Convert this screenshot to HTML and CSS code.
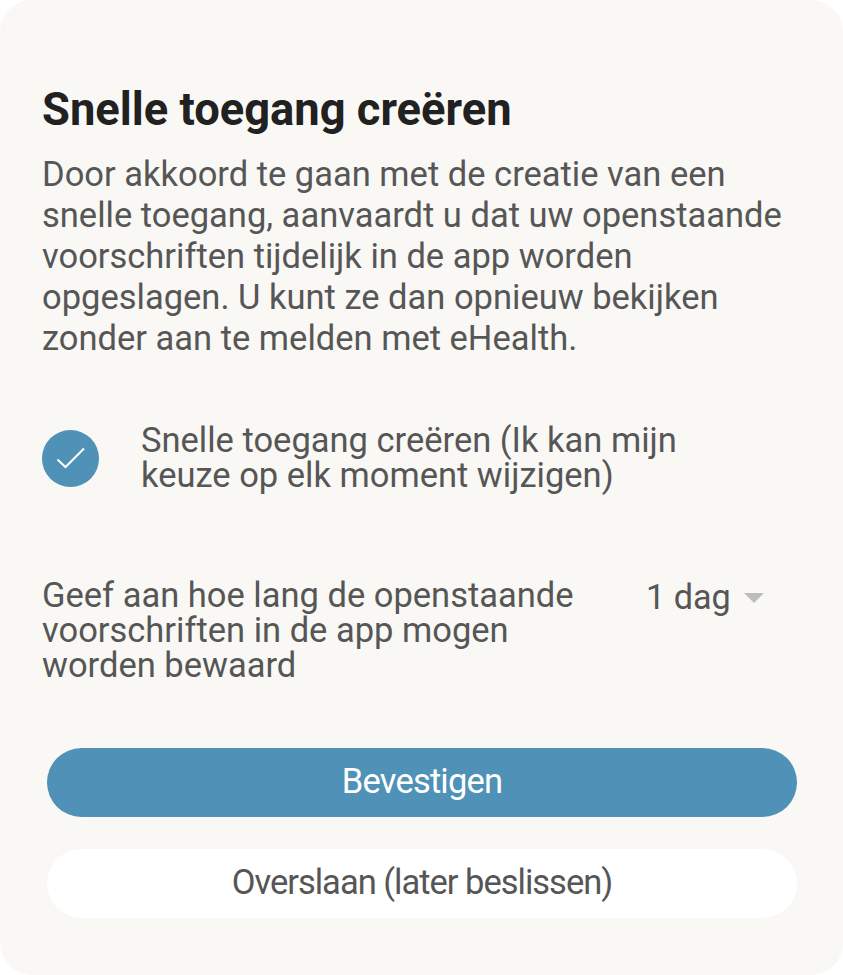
FILE: index.html
```html
<!DOCTYPE html>
<html lang="nl">
<head>
<meta charset="utf-8">
<title>Snelle toegang creëren</title>
<link rel="stylesheet" href="styles.css">
</head>
<body>
<main class="dialog">
  <h1 class="title">Snelle toegang creëren</h1>
  <p class="intro">Door akkoord te gaan met de creatie van een<br>snelle toegang, aanvaardt u dat uw openstaande<br>voorschriften tijdelijk in de app worden<br>opgeslagen. U kunt ze dan opnieuw bekijken<br>zonder aan te melden met eHealth.</p>
  <div class="check-row">
    <span class="check">
      <svg width="30" height="22" viewBox="0 0 30 22"><path d="M1.5 12.5 L9.5 20 L28 1.5" fill="none" stroke="#fff" stroke-width="2"/></svg>
    </span>
    <span class="check-label">Snelle toegang creëren (Ik kan mijn<br>keuze op elk moment wijzigen)</span>
  </div>
  <div class="duration-row">
    <span class="duration-label">Geef aan hoe lang de openstaande<br>voorschriften in de app mogen<br>worden bewaard</span>
    <span class="select">1 dag<span class="caret"></span></span>
  </div>
  <div class="actions">
    <button class="btn btn-primary">Bevestigen</button>
    <button class="btn btn-secondary">Overslaan (later beslissen)</button>
  </div>
</main>
</body>
</html>
```
FILE: styles.css
```css
html, body { margin: 0; padding: 0; background: #fff; }
body { font-family: Roboto, sans-serif; width: 843px; height: 975px; overflow: hidden; }
.dialog {
  box-sizing: border-box;
  width: 843px;
  height: 975px;
  background: #f9f8f5;
  border-radius: 32px;
  padding: 85px 42px 0;
  color: #565656;
}
.title { margin: 0; font-size: 45.3px; line-height: 50px; font-weight: 700; color: #212121; }
.intro { margin: 19px 0 0; font-size: 34.5px; line-height: 41px; }
.check-row { display: flex; align-items: center; margin-top: 63px; height: 72px; }
.check {
  width: 57px; height: 57px; border-radius: 50%; background: #4f91b7;
  display: flex; align-items: center; justify-content: center; flex: none;
}
.check-label { margin-left: 42px; font-size: 34.5px; line-height: 35px; }
.duration-row { display: flex; margin-top: 84px; }
.duration-label { width: 604px; font-size: 34.5px; line-height: 35px; }
.select { font-size: 34.2px; line-height: 35px; display: flex; align-items: center; height: 35px; margin-top: 2px; }
.caret {
  margin-left: 13px; width: 0; height: 0;
  border-left: 10.5px solid transparent; border-right: 10.5px solid transparent;
  border-top: 10.5px solid #bdbdbd;
}
.actions { display: flex; flex-direction: column; gap: 32px; margin: 65px 4px 0 5px; }
.btn {
  height: 69px; border: 0; border-radius: 35px; font-family: inherit; font-size: 34.5px; padding: 0 0 3px;
}
.btn-primary { background: #4f91b7; color: #fff; letter-spacing: -0.8px; }
.btn-secondary { background: #fff; color: #565656; letter-spacing: -1px; }
```
